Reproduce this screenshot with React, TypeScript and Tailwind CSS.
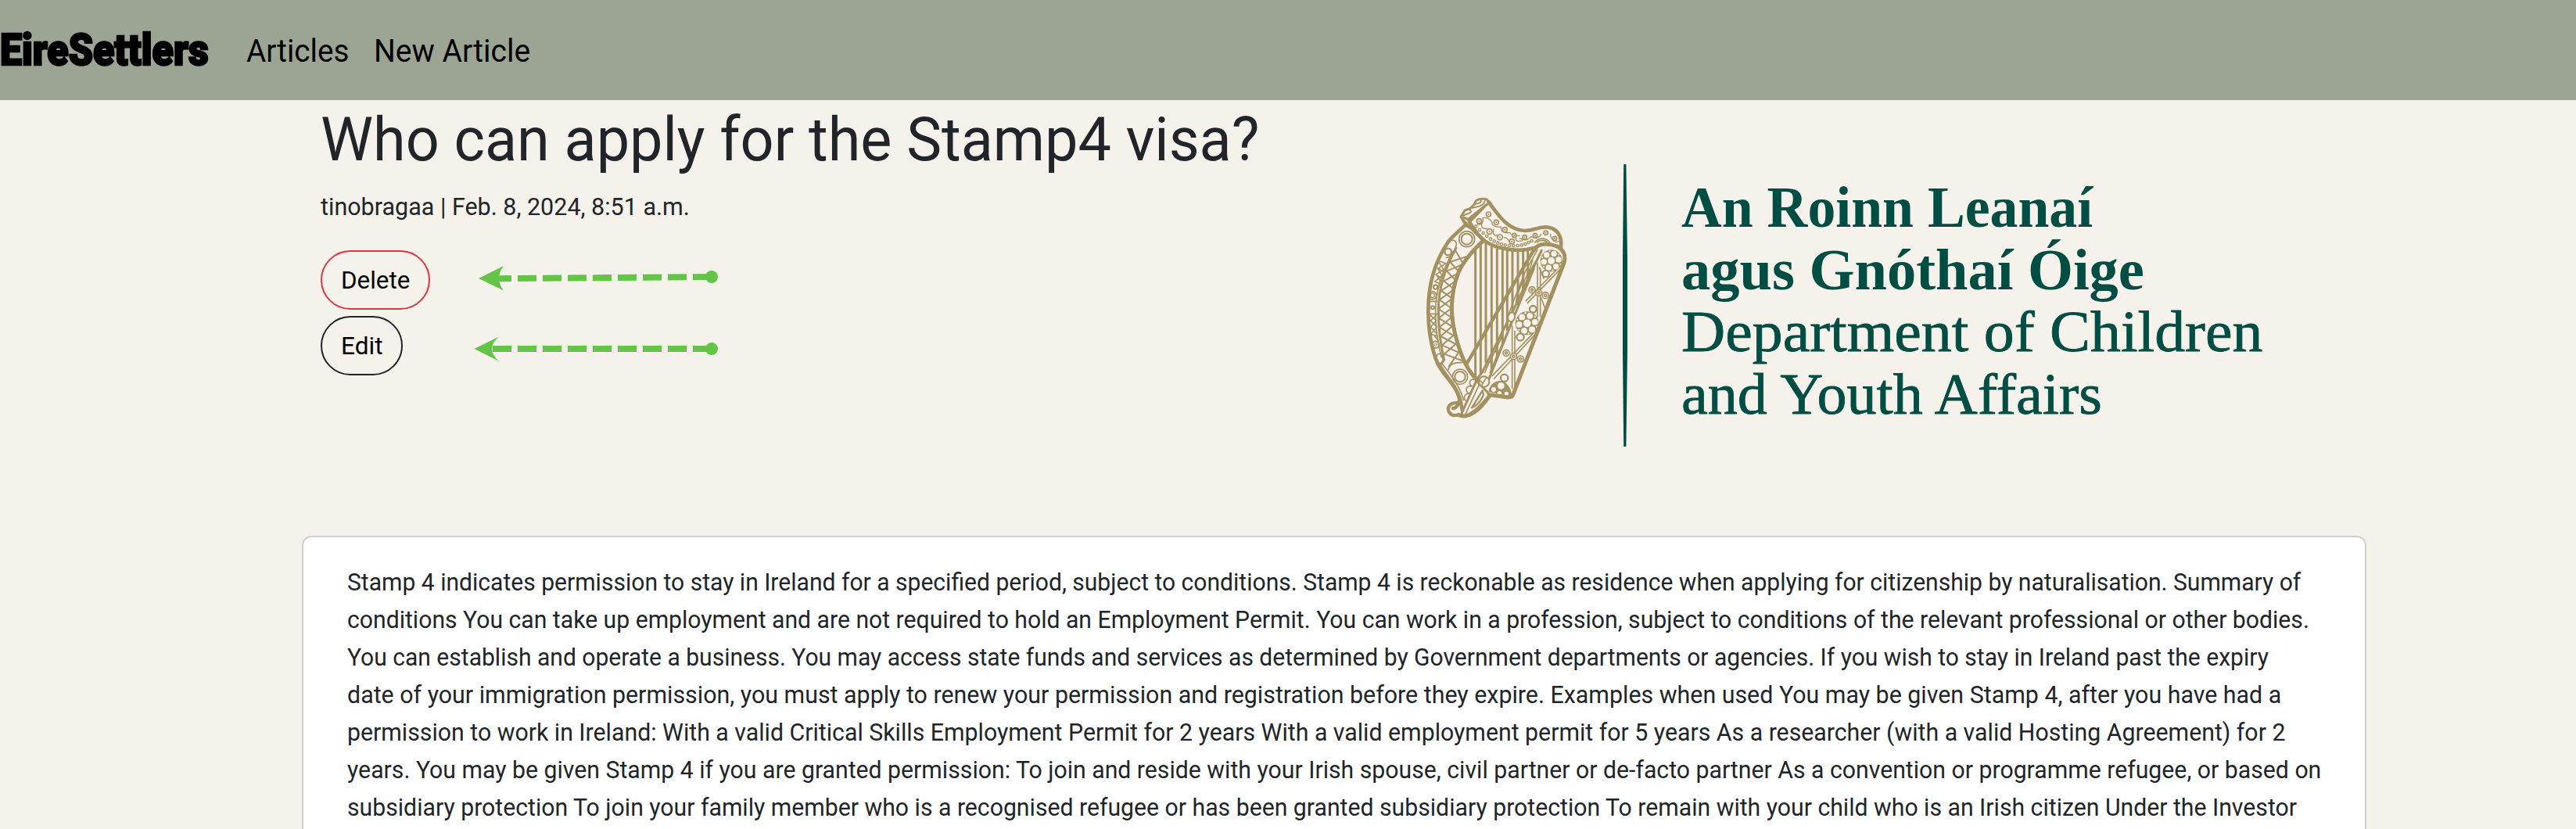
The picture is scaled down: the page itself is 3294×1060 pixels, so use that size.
import { useLayoutEffect, useRef, useState } from "react";
import type { ReactNode } from "react";

/* Single line of text stretched or condensed to an exact width. */
function Line({ width, className = "", children }: { width: number; className?: string; children: ReactNode }) {
  const ref = useRef<HTMLSpanElement>(null);
  const [scale, setScale] = useState(1);
  useLayoutEffect(() => {
    if (ref.current) setScale(width / ref.current.offsetWidth);
  }, [width]);
  return (
    <div className={`whitespace-nowrap ${className}`} style={{ width }}>
      <span ref={ref} className="inline-block origin-left" style={{ transform: `scaleX(${scale})` }}>
        {children}
      </span>
    </div>
  );
}

const article: [number, string][] = [
  [2498, "Stamp 4 indicates permission to stay in Ireland for a specified period, subject to conditions. Stamp 4 is reckonable as residence when applying for citizenship by naturalisation. Summary of"],
  [2509, "conditions You can take up employment and are not required to hold an Employment Permit. You can work in a profession, subject to conditions of the relevant professional or other bodies."],
  [2457, "You can establish and operate a business. You may access state funds and services as determined by Government departments or agencies. If you wish to stay in Ireland past the expiry"],
  [2473, "date of your immigration permission, you must apply to renew your permission and registration before they expire. Examples when used You may be given Stamp 4, after you have had a"],
  [2478, "permission to work in Ireland: With a valid Critical Skills Employment Permit for 2 years With a valid employment permit for 5 years As a researcher (with a valid Hosting Agreement) for 2"],
  [2524, "years. You may be given Stamp 4 if you are granted permission: To join and reside with your Irish spouse, civil partner or de-facto partner As a convention or programme refugee, or based on"],
  [2493, "subsidiary protection To join your family member who is a recognised refugee or has been granted subsidiary protection To remain with your child who is an Irish citizen Under the Investor"],
];

function Arrows() {
  return (
    <svg className="ml-[50px] h-[160px] w-[330px]" viewBox="600 320 330 160" fill="#62c546">
      <path d="M910 354L630 356.3" stroke="#62c546" strokeWidth="8" strokeDasharray="24 8" fill="none" />
      <circle cx="910" cy="354" r="8" />
      <path d="M612 356L644 340Q632 356 644 371.5Z" />
      <path d="M910 446H629.5" stroke="#62c546" strokeWidth="8" strokeDasharray="24 8" fill="none" />
      <circle cx="910" cy="446" r="8" />
      <path d="M606.5 446L637.8 430.5Q620 446 637.8 461.7Z" />
    </svg>
  );
}

const GOLD = "#a39161";
const BG = "#f5f2eb";

const strings: [number, number, number][] = [
  [260, 180, 768], [280, 235, 742], [300, 238, 702], [322, 246, 752], [343, 256, 690], [364, 262, 650],
  [382, 266, 580], [402, 270, 540], [423, 270, 480], [443, 268, 440], [461, 262, 400],
];

const neckRings: [number, number, number][] = [
  [310, 132, 9], [274, 158, 9], [340, 163, 9], [373, 191, 9], [314, 198, 10], [354, 220, 10], [409, 213, 8],
  [400, 236, 9], [449, 220, 8], [489, 213, 8], [530, 203, 8], [564, 225, 8],
];

const neckDots: [number, number][] = [
  [262, 178], [276, 192], [290, 204], [304, 216], [318, 227], [332, 235], [346, 242], [360, 247], [374, 250],
  [390, 252], [406, 253], [422, 252], [437, 250], [451, 246], [464, 240], [476, 234],
];

const studs: [number, number][] = [
  [477, 422], [503, 433], [529, 443], [378, 664], [406, 677], [433, 687],
];

const lattice: [number, number, number, number][] = [
  [186, 275, 232, 292], [163, 315, 214, 323], [150, 350, 199, 355], [139, 388, 186, 387], [129, 425, 178, 420],
  [122, 460, 171, 455], [118, 495, 168, 492], [119, 530, 168, 528], [122, 565, 170, 562], [127, 600, 175, 597],
  [132, 634, 184, 630], [140, 668, 196, 662], [158, 715, 216, 696],
];

function Rosette({ x, y, r }: { x: number; y: number; r: number }) {
  const petals = [0, 1, 2, 3, 4, 5];
  return (
    <g fill={BG} stroke="none">
      <circle cx={x} cy={y} r={r} fill={GOLD} />
      <circle cx={x} cy={y} r={r * 0.32} />
      {petals.map((i) => {
        const a = (i * Math.PI) / 3 - 1.2;
        return <circle key={i} cx={x + Math.cos(a) * r * 0.68} cy={y + Math.sin(a) * r * 0.68} r={r * 0.26} />;
      })}
      {petals.map((i) => {
        const a = (i * Math.PI) / 3 - 0.68;
        return <circle key={i} cx={x + Math.cos(a) * r * 0.88} cy={y + Math.sin(a) * r * 0.88} r={r * 0.08} />;
      })}
    </g>
  );
}

function Harp() {
  return (
    <svg className="mt-[102px] h-[320px] w-[230px]" viewBox="0 0 690 960" fill="none" stroke={GOLD} strokeLinejoin="round" strokeLinecap="round">
      {/* strings */}
      {strings.map(([x, a, b]) => (
        <path key={x} d={`M${x} ${a}V${b}`} strokeWidth="9" strokeLinecap="butt" />
      ))}

      {/* curved fore-pillar */}
      <path fill={BG} strokeWidth="14" d="M222 172C188 205 162 225 154 240C100 320 79 410 79 500C79 580 93 650 115 705C140 755 190 790 203 850L212 895L268 768C235 740 206 680 190 620C162 530 162 440 195 355C215 310 245 275 292 232L245 185Z" />
      <path strokeWidth="9" d="M186 262C145 335 118 420 118 500C118 570 128 640 140 690L128 706" />
      <path strokeWidth="5" d="M174 275C132 350 107 430 107 505C107 570 116 630 130 680" />
      <path strokeWidth="5" d="M158 238C180 222 194 240 182 262C175 285 165 300 148 298" />
      <path strokeWidth="5" d="M130 702C155 735 200 785 214 845" />
      {lattice.slice(0, -1).map(([x1, y1, x2, y2], i) => {
        const [a, b, c, d] = lattice[i + 1];
        return <path key={i} strokeWidth="6" d={`M${x1} ${y1}L${c} ${d}M${x2} ${y2}L${a} ${b}`} />;
      })}
      <path strokeWidth="14" d="M292 232C245 275 215 310 195 355C162 440 162 530 190 620C206 680 235 740 268 768" />
      <circle cx="227" cy="227" r="30" strokeWidth="5" />
      <circle cx="227" cy="227" r="21" strokeWidth="6" />
      <circle cx="201" cy="755" r="29" strokeWidth="5" />
      <circle cx="201" cy="755" r="20" strokeWidth="6" />
      <circle cx="155" cy="276" r="13" strokeWidth="7" />
      <circle cx="95" cy="443" r="15" strokeWidth="6" />
      <circle cx="95" cy="443" r="8" strokeWidth="4" />
      <circle cx="107" cy="411" r="8" strokeWidth="6" />
      <circle cx="96" cy="490" r="6" strokeWidth="6" />
      <circle cx="107" cy="632" r="13" strokeWidth="6" />
      <circle cx="107" cy="632" r="5" strokeWidth="3" />
      <path strokeWidth="5" d="M122 312L146 320M116 338L136 352M108 364L130 376M104 390L124 398M120 316L138 344L110 362L126 390M144 322L116 340L132 368L106 388M84 466H112M84 514H112M86 518L110 540L88 564L112 590M110 518L88 540L112 564L90 590M88 592L116 600M104 600L118 616" />
      <path strokeWidth="5" d="M118 700C104 680 112 660 128 670C140 690 140 705 122 706" />
      <path strokeWidth="5" d="M156 728C162 705 178 700 214 700M262 768C240 760 232 775 244 792M246 790C222 790 220 808 234 820M236 818C216 822 214 838 222 846" />

      {/* neck */}
      <path fill={BG} strokeWidth="14" d="M236 160L310 84C345 130 380 190 448 195C485 197 492 180 530 181C570 182 594 212 588 262L482 262C440 275 350 272 298 236C275 218 254 190 236 160Z" />
      <path fill={BG} strokeWidth="9" d="M222 172L204 142L220 116C245 112 256 96 262 80C278 68 292 74 303 74L311 88L231 152L216 144" />
      <path strokeWidth="6" d="M207 140L228 130C250 128 244 110 230 112M244 108C270 104 290 100 296 82M260 92C276 92 284 84 280 78M212 150L228 168" />
      <path strokeWidth="4" d="M268 170C284 175 292 160 288 146C302 142 318 150 324 164C322 178 345 182 358 180C356 200 372 206 392 202C396 215 424 214 430 214M430 224C455 238 464 226 474 218C490 228 506 222 512 208M548 208C548 232 570 242 580 236M286 164C278 184 292 190 304 186M330 190C324 206 334 218 344 212M370 222C384 218 384 230 390 236M416 224C412 240 430 234 440 234" />
      {neckRings.map(([x, y, r]) => (
        <g key={`${x}-${y}`}>
          <circle cx={x} cy={y} r={r} strokeWidth="5" fill={BG} />
          <circle cx={x} cy={y} r="3" fill={GOLD} stroke="none" />
        </g>
      ))}
      {neckDots.map(([x, y]) => (
        <circle key={`${x}-${y}`} cx={x} cy={y} r="5" strokeWidth="4" />
      ))}
      <path strokeWidth="5" d="M488 240C505 218 535 222 548 244M496 240C508 228 528 230 538 242" />

      {/* soundbox */}
      <path fill={BG} stroke="none" d="M486 268C500 240 545 244 570 254C598 266 608 290 600 318L408 815C402 836 394 834 384 834L312 824L296 790L500 292Z" />
      <path strokeWidth="13" d="M488 262L226 706" />
      <path strokeWidth="9" d="M514 270L410 490L286 738L262 768" />
      <path strokeWidth="9" d="M484 340L414 510L306 778" />
      <path strokeWidth="5" d="M498 268L452 350L404 470L386 520M480 300C474 350 446 370 440 420M500 300C478 330 462 360 452 400M444 370C442 400 418 430 416 470M386 540C362 580 350 600 336 660M366 580C362 620 326 660 318 700M350 610C348 650 312 690 296 740M396 546C380 600 350 650 316 740" />
      <ellipse cx="398" cy="526" rx="13" ry="18" strokeWidth="6" fill={BG} transform="rotate(15 398 526)" />
      <path strokeWidth="5" d="M498 320V525M509 340V525M401 560V800M411 580V810M588 340L460 472M580 336L454 464M492 590L332 762M484 586L324 752" />
      <path strokeWidth="5" d="M505 336L522 378M512 452L532 506" />
      <Rosette x={551} y={310} r={42} />
      <Rosette x={458} y={550} r={45} />
      <circle cx="530" cy="360" r="13" strokeWidth="6" fill={BG} />
      <circle cx="481" cy="496" r="13" strokeWidth="7" fill={BG} />
      <circle cx="432" cy="603" r="14" strokeWidth="7" fill={BG} />
      <path d="M312 812C322 760 388 756 398 826Z" fill={GOLD} strokeWidth="4" />
      <g fill={BG} strokeWidth="4">
        <circle cx="358" cy="790" r="15" />
        <circle cx="330" cy="804" r="11" />
        <circle cx="352" cy="818" r="10" />
        <circle cx="379" cy="820" r="10" />
        <circle cx="371" cy="760" r="14" strokeWidth="7" />
      </g>
      {studs.map(([x, y]) => (
        <g key={`${x}-${y}`}>
          <circle cx={x} cy={y} r="12" strokeWidth="5" fill={BG} />
          <circle cx={x} cy={y} r="4.5" strokeWidth="5" />
        </g>
      ))}
      <path strokeWidth="15" d="M486 268C500 240 545 244 570 254C598 266 608 290 600 318L408 815C402 836 394 834 384 834L312 824" />

      {/* foot */}
      <path fill={BG} strokeWidth="9" d="M264 770L206 898C222 914 262 890 312 826L304 812Z" />
      <path strokeWidth="7" d="M287 808L246 874C265 866 280 850 291 826Z" />
      <path strokeWidth="5" d="M276 782L222 898" />
      <circle cx="293" cy="774" r="20" strokeWidth="6" fill={BG} />
      <path strokeWidth="5" d="M283 790L302 758M274 768L290 780" />
      <path strokeWidth="13" d="M192 856C168 852 152 866 157 886C162 906 184 906 196 900C205 912 232 910 262 888C280 876 300 850 314 830" />
      <path strokeWidth="13" d="M120 706C150 760 192 795 198 840C200 860 184 878 174 876" />
    </svg>
  );
}

export default function App() {
  return (
    <div className="h-[1060px] w-[3294px] overflow-hidden bg-[#f5f2eb] font-['Roboto',sans-serif] text-[#212529]">
      <nav className="flex h-32 items-center bg-[#9ca593] text-black">
        <Line width={267} className="text-[55px] leading-[84px] font-black [-webkit-text-stroke:2.5px_black]">EireSettlers</Line>
        <Line width={131} className="mt-[1px] ml-[48px] text-[41px] leading-[60px]">Articles</Line>
        <Line width={200} className="mt-[1px] ml-[32px] text-[41px] leading-[60px]">New Article</Line>
      </nav>

      <header className="flex h-[557px] items-start pl-[410px]">
        <div className="w-[1390px] pt-[3px]">
          <h1>
            <Line width={1200} className="text-[78px] leading-[96px]">Who can apply for the Stamp4 visa?</Line>
          </h1>
          <Line width={472} className="mt-[14px] text-[31px] leading-[48px]">tinobragaa | Feb. 8, 2024, 8:51 a.m.</Line>
          <div className="mt-[31px] flex">
            <div className="flex w-[140px] flex-col items-start gap-2 text-[31px] leading-[48px] text-black">
              <button className="h-[76px] rounded-full border-2 border-[#dc3545] pt-[2px] pr-[24px] pl-[24px]">
                <Line width={88}>Delete</Line>
              </button>
              <button className="h-[76px] rounded-full border-2 border-[#212529] pt-[2px] pr-[24px] pl-[23px]">
                <Line width={54}>Edit</Line>
              </button>
            </div>
            <Arrows />
          </div>
        </div>
        <Harp />
        <svg className="mt-[82px] ml-[40px] h-[361px] w-[16px]" viewBox="0 0 16 361" fill="#004d43">
          <path d="M6.2 0H9.4L11 120V240L9.4 361H6.2L5 240V120Z" />
        </svg>
        <div className="mt-[97px] ml-[64px] font-['Liberation_Serif',serif] text-[75px] leading-[79.7px] text-[#004d43]">
          <Line width={526} className="font-bold">An Roinn Leanaí</Line>
          <Line width={592} className="font-bold">agus Gnóthaí Óige</Line>
          <Line width={743} className="[-webkit-text-stroke:0.8px_#004d43]">Department of Children</Line>
          <Line width={538} className="[-webkit-text-stroke:0.8px_#004d43]">and Youth Affairs</Line>
        </div>
      </header>

      <main className="ml-[386px] h-[420px] w-[2640px] rounded-t-xl border-2 border-[#d0d1cf] bg-white pt-[34px] pl-[56px] text-[31px] leading-[48px]">
        {article.map(([w, t]) => (
          <Line key={t} width={w}>{t}</Line>
        ))}
      </main>
    </div>
  );
}
